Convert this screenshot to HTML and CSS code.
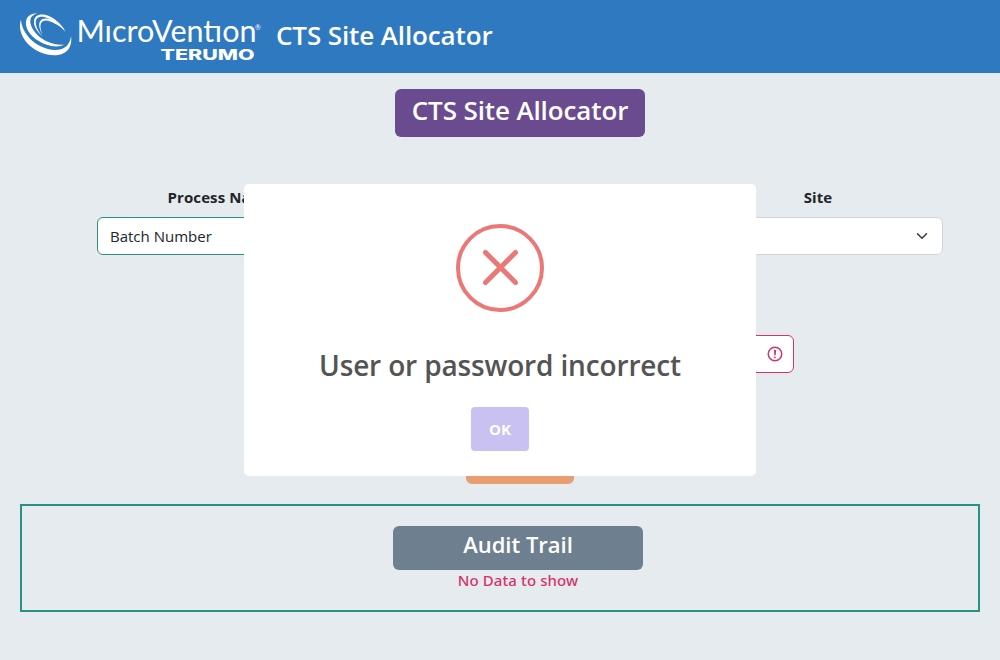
FILE: index.html
```html
<!DOCTYPE html>
<html lang="en">
<head>
<meta charset="utf-8">
<title>CTS Site Allocator</title>
<link rel="stylesheet" href="styles.css">
</head>
<body>
<header class="navbar">
  <svg class="logo" width="244" height="56" viewBox="18 8 244 56" role="img" aria-label="MicroVention Terumo">
    <g fill="#fff">
      <path d="M21 19.500C18.500 27 20.500 36 28 44C36 52 48 56.500 58 55C68 53.500 72.500 46 71 36C70.500 42 67 48 60 49.500C49 51.500 36 46 28.500 37C23.500 31 21 25 21 19.500Z"/>
      <path d="M38 13.200C30 13 25 17 26 25C27 33 36 41 46 44.500C53 47 60 47 64.500 44.500C59 45.500 52 44 46 41C38 37 32 30 30.500 23.500C29.500 18 32 14.500 38 13.200Z"/>
      <path d="M43 37C37 32 33.500 26 34 21C34.500 15.500 39 13.500 45 14.800C54 17 61.500 24 65.500 32C60 25 53 19.500 45 17.200C39 15.800 35.800 18 35.800 22.500C35.800 27 38.500 32 43 37Z"/>
      <path d="M42.500 34.500C39.500 30 38.500 25 39.700 22C41.500 17.500 48 17.500 54 20.500C59 23 63 26.500 64.500 30C58 24.500 51 21 46 20.500C40 20.500 39 26 42.500 34.500Z"/>
    </g>
    <text class="logo-name" x="76.500" y="42" textLength="180" lengthAdjust="spacingAndGlyphs">MıcroVentıon</text>
    <text class="logo-mark" x="255" y="30">®</text>
    <text class="logo-sub" x="160.500" y="59.500" textLength="94" lengthAdjust="spacingAndGlyphs">TERUMO</text>
  </svg>
  <span class="brand">CTS Site Allocator</span>
</header>

<main class="page">
  <h1 class="title">CTS Site Allocator</h1>
  <div class="fields">
    <div class="field">
      <label>Process Name</label>
      <div class="control process">Batch Number</div>
    </div>
    <div class="field">
      <label>Site</label>
      <div class="control select">
        <svg width="12" height="12" viewBox="0 0 16 16"><path d="m2 5 6 6 6-6" fill="none" stroke="#343a40" stroke-width="2" stroke-linecap="round" stroke-linejoin="round"/></svg>
      </div>
    </div>
  </div>
  <div class="control invalid">
    <svg width="18" height="18" viewBox="0 0 12 12"><circle cx="6" cy="6" r="4.500" fill="none" stroke="#d63369"/><path d="M5.800 3.600h.4L6 6.500z" fill="#d63369" stroke="#d63369" stroke-linejoin="round"/><circle cx="6" cy="8.200" r=".6" fill="#d63369"/></svg>
  </div>
  <div class="submit"></div>
  <section class="audit">
    <h2 class="audit-title">Audit Trail</h2>
    <p class="empty">No Data to show</p>
  </section>
</main>

<div class="modal" role="dialog">
  <svg class="error-icon" width="88" height="88" viewBox="0 0 88 88" fill="none" stroke="#eb7777">
    <circle cx="44" cy="44" r="42" stroke-width="4"/>
    <path d="M29.500 28.500 59.500 58.500M59.500 28.500 29.500 58.500" stroke-width="5" stroke-linecap="round"/>
  </svg>
  <div class="modal-title">User or password incorrect</div>
  <button class="ok">OK</button>
</div>
</body>
</html>
```
FILE: styles.css
```css
* { box-sizing: border-box; }
body {
  margin: 0;
  height: 660px;
  overflow: hidden;
  background: #e6ebef;
  color: #212529;
  font-family: "Segoe UI", "Open Sans", "Noto Sans", sans-serif;
  font-size: 15px;
}
.navbar {
  display: flex;
  align-items: flex-start;
  height: 73px;
  padding: 8px 18px;
  background: #2f79c1;
  color: #fff;
}
.logo { flex: none; fill: #fff; }
.logo-name { font: 400 30.5px Lato, sans-serif; }
.logo-mark { font: 7px Lato, sans-serif; }
.logo-sub { font: 800 15px Inter, sans-serif; }
.brand {
  margin-left: 14px;
  font-size: 26px;
  line-height: 55px;
  font-weight: 600;
  letter-spacing: -0.12px;
  white-space: nowrap;
}
.page {
  display: flex;
  flex-direction: column;
  padding: 16px 20px 0;
}
.title {
  width: 250px;
  height: 48px;
  margin: 0 0 0 375px;
  border-radius: 6px;
  background: #6b4b8f;
  color: #fff;
  font-size: 26px;
  line-height: 43px;
  font-weight: 600;
  letter-spacing: -0.12px;
  text-align: center;
  white-space: nowrap;
}
.fields {
  display: grid;
  grid-template-columns: 248px 277px;
  justify-content: space-between;
  margin: 49px 37px 0 77px;
}
.field { display: flex; flex-direction: column; }
.field label {
  height: 31px;
  line-height: 23px;
  font-weight: 700;
  letter-spacing: 0.1px;
  text-align: center;
}
.field:last-child label { padding-left: 27px; }
.control {
  height: 38px;
  border: 1px solid #ced4da;
  border-radius: 6px;
  background: #fff;
}
.process {
  padding-left: 12px;
  border-color: #2a9187;
  line-height: 37px;
}
.select, .invalid {
  display: flex;
  align-items: center;
  justify-content: flex-end;
  padding-right: 14px;
}
.invalid {
  width: 548px;
  margin: 80px 0 0 226px;
  padding-right: 9px;
  border-color: #d63369;
}
.submit {
  width: 108px;
  height: 38px;
  margin: 73px 0 0 446px;
  border-radius: 6px;
  background: #e99e72;
}
.audit {
  height: 108px;
  margin-top: 20px;
  padding-top: 20px;
  border: 2px solid #2a9187;
}
.audit-title {
  width: 250px;
  height: 44px;
  margin: 0 0 0 371px;
  border-radius: 6px;
  background: #6e8090;
  color: #fff;
  font-size: 22px;
  line-height: 37px;
  font-weight: 600;
  text-align: center;
}
.empty {
  width: 250px;
  margin: 0 0 0 371px;
  color: #d63369;
  font-family: "Segoe UI", "Noto Sans", sans-serif;
  font-weight: 500;
  line-height: 21px;
  letter-spacing: 0.1px;
  text-align: center;
}
.modal {
  position: absolute;
  top: 184px;
  left: 244px;
  display: flex;
  flex-direction: column;
  align-items: center;
  width: 512px;
  height: 292px;
  padding-top: 40px;
  border-radius: 5px;
  background: #fff;
}
.modal-title {
  margin-top: 33px;
  color: #545454;
  font-family: "Segoe UI", "Open Sans", sans-serif;
  font-size: 28px;
  line-height: 40px;
  font-weight: 600;
  letter-spacing: -0.15px;
  white-space: nowrap;
}
.ok {
  width: 58px;
  height: 44px;
  margin-top: 22px;
  padding: 0;
  border: 0;
  border-radius: 4px;
  background: #c8c1f1;
  color: #fff;
  font: 700 15px "Segoe UI", "Open Sans", sans-serif;
}
```
